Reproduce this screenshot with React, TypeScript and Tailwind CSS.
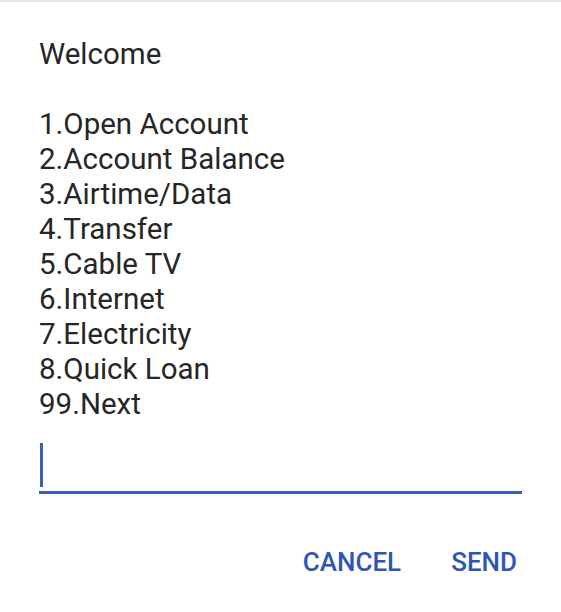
export default function App() {
  const items = [
    '1.Open Account',
    '2.Account Balance',
    '3.Airtime/Data',
    '4.Transfer',
    '5.Cable TV',
    '6.Internet',
    '7.Electricity',
    '8.Quick Loan',
    '99.Next',
  ];

  return (
    <div className="h-[612px] w-[561px] border-t-2 border-[#e5e5e5] bg-white font-['Roboto',sans-serif] text-[#262626]">
      <div className="px-[39px] pt-[35px]">
        <p className="text-[29.5px] leading-[35px]">Welcome</p>
        <div className="mt-[35px] text-[29.5px] leading-[35px]">
          {items.map((item) => (
            <p key={item}>{item}</p>
          ))}
        </div>
        <div className="mt-[20px] flex h-[52px] items-end border-b-[3px] border-[#3a5fb5] pb-[4px] pl-[1px]">
          <span className="h-[44px] w-[3px] bg-[#3a5fb5]" />
        </div>
      </div>
      <div className="mt-[49px] flex justify-end gap-[50px] pr-[44px]">
        <button className="text-[26px] font-medium text-[#2f56b5]">CANCEL</button>
        <button className="text-[26px] font-medium text-[#2f56b5]">SEND</button>
      </div>
    </div>
  );
}
